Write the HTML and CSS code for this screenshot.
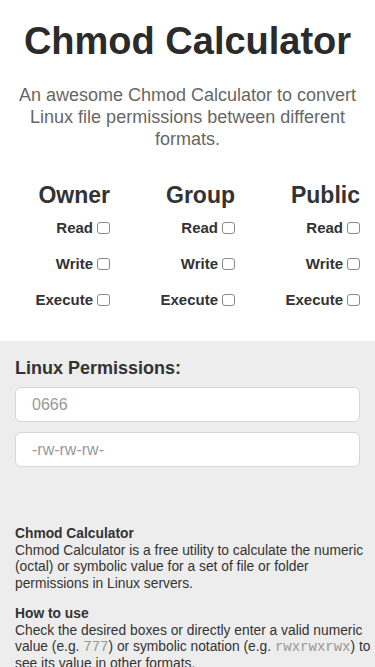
FILE: index.html
```html
<!DOCTYPE html>
<html lang="en">
  <head>
    <meta charset="UTF-8" />
    <meta name="viewport" content="width=device-width, initial-scale=1.0" />
    <title>Chmod Calculator</title>
    <link rel="stylesheet" href="styles.css">
  </head>
  <body>
    <header class="intro">
      <h1>Chmod Calculator</h1>
      <p class="lead">
        An awesome Chmod Calculator to convert Linux file permissions between
        different formats.
      </p>
    </header>

    <!-- Permission checkboxes -->
    <div class="perm-grid">
      <div class="perm-col">
        <h2>Owner</h2>
        <label class="perm">Read <input type="checkbox" /></label>
        <label class="perm">Write <input type="checkbox" /></label>
        <label class="perm">Execute <input type="checkbox" /></label>
      </div>
      <div class="perm-col">
        <h2>Group</h2>
        <label class="perm">Read <input type="checkbox" /></label>
        <label class="perm">Write <input type="checkbox" /></label>
        <label class="perm">Execute <input type="checkbox" /></label>
      </div>
      <div class="perm-col">
        <h2>Public</h2>
        <label class="perm">Read <input type="checkbox" /></label>
        <label class="perm">Write <input type="checkbox" /></label>
        <label class="perm">Execute <input type="checkbox" /></label>
      </div>
    </div>

    <!-- Result fields and info -->
    <section class="results">
      <h3>Linux Permissions:</h3>
      <input class="field" type="text" placeholder="0666" />
      <input class="field" type="text" placeholder="-rw-rw-rw-" />

      <div class="info">
        <p>
          <strong>Chmod Calculator</strong><br />Chmod Calculator is a free
          utility to calculate the numeric (octal) or symbolic value for a set
          of file or folder permissions in Linux servers.
        </p>
        <p>
          <strong>How to use</strong><br />Check the desired boxes or directly
          enter a valid numeric value (e.g. <code>777</code>) or symbolic
          notation (e.g. <code>rwxrwxrwx</code>) to see its value in other
          formats.
        </p>
      </div>
    </section>
  </body>
</html>
```

FILE: styles.css
```css
body {
  font-family: "Liberation Sans", Arial, sans-serif;
  color: #333;
  margin: 0;
  background: #fff;
}

/* Title area */
.intro {
  text-align: center;
  padding: 19px 15px 0 15px;
}

h1 {
  font-size: 38px;
  font-weight: bold;
  line-height: 44px;
  margin: 0;
  color: #2b2b2b;
}

.lead {
  font-size: 18px;
  line-height: 22px;
  color: #666;
  margin: 21px 0 0 0;
}

/* Checkbox columns */
.perm-grid {
  display: grid;
  grid-template-columns: repeat(3, 125px);
  padding: 32px 0 19px 0;
}

.perm-col {
  display: flex;
  flex-direction: column;
  align-items: flex-end;
  padding-right: 15px;
}

.perm-col h2 {
  font-size: 23px;
  font-weight: bold;
  line-height: 26px;
  margin: 0 0 6px 0;
}

.perm {
  font-size: 15px;
  font-weight: bold;
  line-height: 18px;
  height: 36px;
  display: flex;
  align-items: flex-start;
  padding-top: 5px;
  box-sizing: border-box;
}

.perm input {
  appearance: none;
  width: 13px;
  height: 12px;
  margin: 3px 0 0 4px;
  border: 1px solid #8a8a8a;
  border-radius: 3px;
  background: #fff;
  box-sizing: border-box;
}

/* Gray results section */
.results {
  background: #ededed;
  padding: 16px 15px 10px 15px;
  min-height: 320px;
}

.results h3 {
  font-size: 18px;
  font-weight: bold;
  line-height: 22px;
  margin: 0 0 8px 0;
}

.field {
  display: block;
  width: 100%;
  height: 35px;
  box-sizing: border-box;
  margin: 0 0 10px 0;
  padding: 0 16px;
  border: 1px solid #d6d6d6;
  border-radius: 6px;
  background: #fff;
  font-family: "Liberation Sans", Arial, sans-serif;
  font-size: 16px;
}

.field::placeholder {
  color: #999;
}

.info {
  padding-top: 49px;
  margin-right: -14px;
}

.info p {
  font-size: 13.8px;
  line-height: 16.5px;
  margin: 0 0 14px 0;
  color: #333;
}

.info code {
  font-family: "Liberation Mono", "Courier New", monospace;
  font-size: 14px;
  line-height: 1;
  color: #999;
}
```
